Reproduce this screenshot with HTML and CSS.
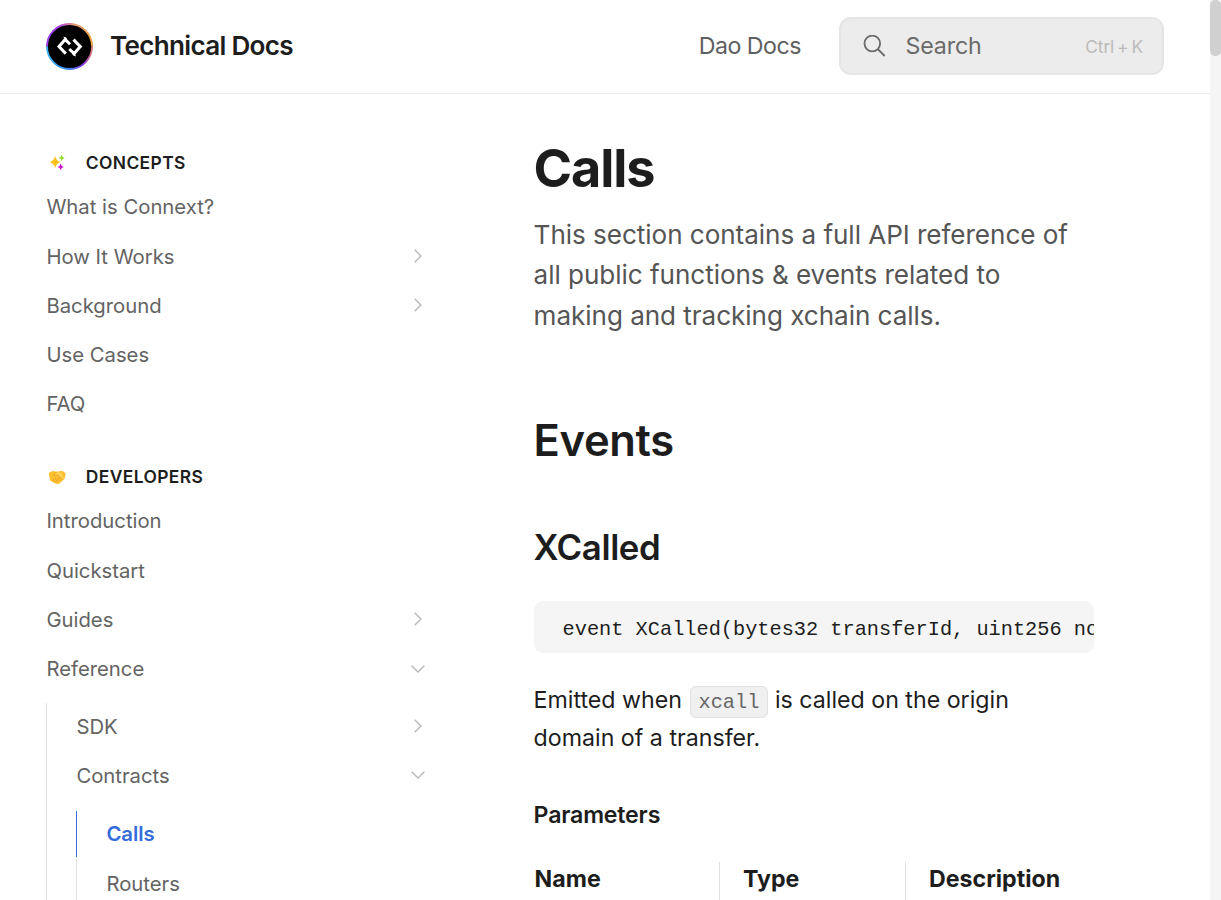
FILE: index.html
```html
<!DOCTYPE html>
<html lang="en">
<head>
<meta charset="utf-8">
<title>Calls - Technical Docs</title>
<link rel="stylesheet" href="styles.css">
</head>
<body>
<svg class="defs" width="0" height="0">
  <symbol id="right" viewBox="0 0 16 16"><path d="M4.7 1.7l6.2 6.3-6.2 6.3" fill="none" stroke="currentColor" stroke-width="1.4"/></symbol>
  <symbol id="down" viewBox="0 0 16 16"><path d="M1.7 4.7L8 10.9l6.3-6.2" fill="none" stroke="currentColor" stroke-width="1.4"/></symbol>
</svg>
<div class="viewport">
  <div class="page">
    <header class="header">
      <a class="brand">
        <svg class="logo" viewBox="0 0 47 47">
          <defs>
            <linearGradient id="ring-a" x1="0" y1="0" x2="1" y2="0.3"><stop offset="0" stop-color="#4c55ff"/><stop offset=".25" stop-color="#a83cf0"/><stop offset=".55" stop-color="#e89a7a"/><stop offset="1" stop-color="#f0a040"/></linearGradient>
            <linearGradient id="ring-b" x1="0" y1="0.5" x2="1" y2="0.5"><stop offset="0" stop-color="#38b6ff"/><stop offset=".5" stop-color="#3a8cf5"/><stop offset=".8" stop-color="#8c35ea"/><stop offset="1" stop-color="#e07a70"/></linearGradient>
          </defs>
          <circle cx="23.5" cy="23.5" r="23" fill="#000"/>
          <path d="M1 23.5a22.5 22.5 0 0 1 45 0" fill="none" stroke="url(#ring-a)" stroke-width="1.8"/>
          <path d="M1 23.5a22.5 22.5 0 0 0 45 0" fill="none" stroke="url(#ring-b)" stroke-width="1.8"/>
          <g fill="none" stroke="#fff" stroke-width="3">
            <path d="M19.8 30.6L13 23.5l6.2-7 4.8 4.8"/>
            <path d="M27.5 16.6l6.8 7-6.2 7-4.8-4.6"/>
          </g>
          <path d="M17.6 13.6l2.8 1.2 1.4 3.6-3.4.6zM29.8 33.4l-2.9-1.2-1.4-3.6 3.4-.6z" fill="#fff"/>
        </svg>
        <span class="brand-name">Technical Docs</span>
      </a>
      <nav class="header-nav">
        <a class="header-link">Dao Docs</a>
        <div class="search">
          <svg class="search-icon" viewBox="0 0 23 23"><circle cx="9.3" cy="8.5" r="7.8" fill="none" stroke="currentColor" stroke-width="1.8"/><path d="M14.7 14l7 7" stroke="currentColor" stroke-width="1.8"/></svg>
          <span class="search-label">Search</span>
          <span class="search-keys">Ctrl + K</span>
        </div>
      </nav>
    </header>
    <div class="columns">
      <aside class="sidebar">
        <section class="group">
          <div class="group-title">
            <svg class="emoji" viewBox="0 0 22 22"><path d="M9.1 4.8q1 5.3 5.6 6.2-4.6 1-5.6 6.6-1-5.6-5.8-6.6 4.8-.9 5.8-6.2z" fill="#fcc21b"/><path d="M15.7 3.8q.5 2.8 3 3.2-2.5.5-3 3.2-.5-2.7-3-3.2 2.5-.4 3-3.2z" fill="#8fdc2c"/><path d="M14.6 12.6q.5 2.9 3.2 3.3-2.7.5-3.2 3.3-.4-2.8-3-3.3 2.6-.4 3-3.3z" fill="#cb12cd"/></svg>
            <span class="group-name">CONCEPTS</span>
          </div>
          <ul class="list">
            <li class="item">What is Connext?</li>
            <li class="item">How It Works<svg class="chev"><use href="#right"/></svg></li>
            <li class="item">Background<svg class="chev"><use href="#right"/></svg></li>
            <li class="item">Use Cases</li>
            <li class="item">FAQ</li>
          </ul>
        </section>
        <section class="group">
          <div class="group-title">
            <svg class="emoji" viewBox="0 0 22 22"><path d="M2.7 7l3.6-2.1 4.9.8 4.7-.9 3.8 2.4-1 5.2-5.1 5-3 .7-6.4-3.4z" fill="#fdbf2d"/><path d="M8 8.7l3.2-2.6 4 .4 2.8 5.7-1.7 1.1-4.8-4-3 1.2z" fill="#ffd155"/><path d="M10.9 5.9L7.9 8.6l.9 1.4 2.7-.9 4.8 4M7 13.2l2.2 3.2M9.3 12.2l2 3.6M11.8 12l1.7 2.7" fill="none" stroke="#e59a22" stroke-width=".8"/></svg>
            <span class="group-name">DEVELOPERS</span>
          </div>
          <ul class="list">
            <li class="item">Introduction</li>
            <li class="item">Quickstart</li>
            <li class="item">Guides<svg class="chev"><use href="#right"/></svg></li>
            <li class="item">Reference<svg class="chev"><use href="#down"/></svg></li>
          </ul>
          <ul class="list nested">
            <li class="item">SDK<svg class="chev"><use href="#right"/></svg></li>
            <li class="item">Contracts<svg class="chev"><use href="#down"/></svg></li>
            <li>
              <ul class="list nested inner">
                <li class="item active">Calls</li>
                <li class="item">Routers</li>
              </ul>
            </li>
          </ul>
        </section>
      </aside>
      <main class="content">
        <h1 class="title">Calls</h1>
        <p class="lead">This section contains a full API reference of<br>all public functions &amp; events related to<br>making and tracking xchain calls.</p>
        <h2 class="section-title">Events</h2>
        <h3 class="event-title">XCalled</h3>
        <pre class="code">event XCalled(bytes32 transferId, uint256 nonce, bytes32 messageHash)</pre>
        <p class="text">Emitted when <code class="inline">xcall</code> is called on the origin<br>domain of a transfer.</p>
        <h4 class="params-title">Parameters</h4>
        <div class="table-head">
          <div class="cell">Name</div>
          <div class="cell">Type</div>
          <div class="cell">Description</div>
        </div>
      </main>
    </div>
  </div>
  <div class="scrollbar"><div class="thumb"></div></div>
</div>
</body>
</html>
```

FILE: styles.css
```css
* { box-sizing: border-box; }
body { margin: 0; background: #fff; color: #1d1d1d; font-family: Inter, sans-serif; font-size: 23.2px; }
h1, h2, h3, h4, p, ul, pre { margin: 0; padding: 0; }
ul { list-style: none; }
.defs { display: block; }
.viewport { display: flex; width: 1221px; height: 900px; overflow: hidden; }
.page { width: 1210px; height: 900px; overflow: hidden; }
.scrollbar { width: 11px; background: #f5f5f5; }
.thumb { height: 56px; border-radius: 5px; background: #d0d0d0; }

.header { display: flex; align-items: center; justify-content: space-between; height: 94px; padding: 0 46px 1px; border-bottom: 1px solid #ededed; }
.brand { display: flex; align-items: center; gap: 17px; }
.logo { width: 47px; height: 47px; }
.brand-name { margin-top: -2px; font-size: 26.1px; font-weight: 600; letter-spacing: -0.7px; }
.header-nav { display: flex; align-items: center; gap: 38px; }
.header-link { color: #5f5f5f; letter-spacing: -0.5px; }
.search { display: flex; align-items: center; width: 325px; height: 58px; padding: 0 19px 0 22px; border: 2px solid #e5e5e5; border-radius: 12px; background: #ececec; color: #6a6a6a; }
.search-icon { width: 23px; height: 23px; margin-right: 19.5px; }
.search-label { flex: 1; letter-spacing: -0.15px; }
.search-keys { font-size: 17.4px; color: #bbb; letter-spacing: -0.1px; word-spacing: -1.9px; }

.columns { display: flex; }
.sidebar { width: 434px; padding: 55px 0 0 46px; color: #636363; font-size: 20.3px; }
.group { margin-bottom: 36.4px; }
.group-title { display: flex; align-items: center; height: 26px; margin-bottom: 8.8px; color: #1d1d1d; }
.group + .group .group-title { margin-bottom: 8.2px; }
.emoji { width: 22px; height: 22px; margin-right: 17.8px; }
.group-name { font-size: 17.4px; font-weight: 600; letter-spacing: 0.4px; }
.list { display: flex; flex-direction: column; gap: 2.85px; }
.item { display: flex; align-items: center; justify-content: space-between; height: 46.4px; padding-left: .4px; padding-right: 8px; }
.chev { width: 16px; height: 16px; color: #b8b8b8; }
.nested { margin-top: 11.2px; border-left: 1px solid #e2e2e2; }
.nested > .item { padding-left: 29.4px; }
.inner { margin: 9.2px 0 0 29px; }
.inner > .item.active { margin-left: -1px; border-left: 1px solid #346ddb; color: #346ddb; font-weight: 600; }

.content { width: 560.4px; margin-left: 99.6px; padding-top: 41px; }
.title { font-size: 52.2px; line-height: 66px; font-weight: 700; letter-spacing: -1.15px; }
.lead { margin-top: 13.6px; font-size: 26.1px; line-height: 40.5px; color: #555; letter-spacing: -0.05px; }
.section-title { margin-top: 75.4px; font-size: 43.5px; line-height: 58px; font-weight: 600; letter-spacing: -0.35px; }
.event-title { margin-top: 55px; font-size: 34.8px; line-height: 46px; font-weight: 600; letter-spacing: -0.4px; }
.code { height: 52px; margin-top: 30.5px; padding-left: 29px; overflow: hidden; border-radius: 9px; background: #f5f5f5; font-family: "Liberation Mono", monospace; font-size: 20.3px; line-height: 57px; }
.text { margin-top: 28.5px; line-height: 38px; }
.inline { margin-left: 1px; padding: 4px 8px 3px; border: 1px solid #e2e2e2; border-radius: 6px; background: #f0f0f0; color: #666; font-family: "Liberation Mono", monospace; font-size: 20.3px; line-height: 20px; }
.params-title { margin-top: 41px; font-size: 23.2px; line-height: 34px; font-weight: 600; letter-spacing: -0.2px; }
.table-head { display: grid; grid-template-columns: 185.4px 186px 188px; margin-top: 30px; height: 60px; }
.cell { padding: 0 0 0 23px; line-height: 34px; font-weight: 700; }
.cell:first-child { padding-left: 1px; }
.cell + .cell { border-left: 1px solid #e0e0e0; }
```
